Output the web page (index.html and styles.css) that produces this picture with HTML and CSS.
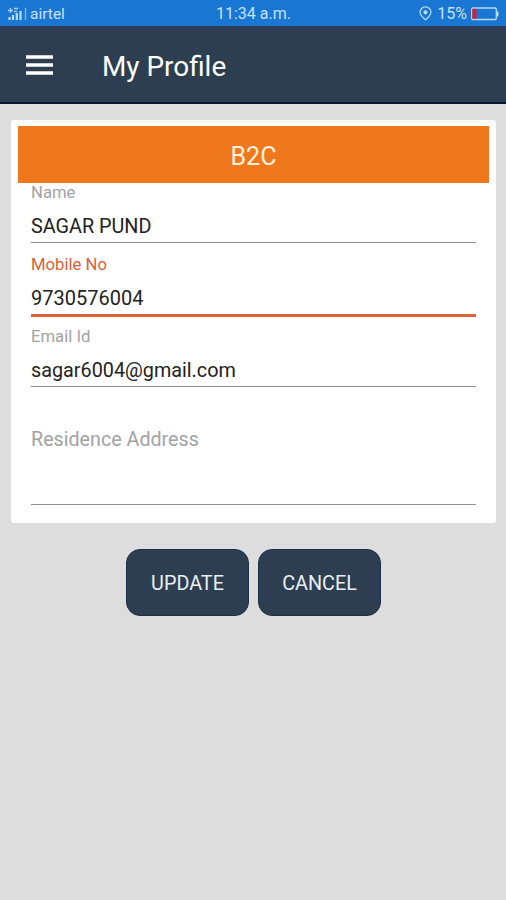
FILE: index.html
```html
<!DOCTYPE html>
<html lang="en">
<head>
<meta charset="utf-8">
<title>My Profile</title>
<link rel="stylesheet" href="styles.css">
</head>
<body>
<header>
  <div class="status">
    <div class="status-side">
      <svg class="signal" width="19" height="14" viewBox="0 0 19 14" fill="none" stroke="#b9dcf2">
        <path d="M1.500 13v-3M5 13V8M8.800 13V6M12.500 13V4" stroke-width="2.200"/>
        <path d="M17.500 13V1" stroke-width="1.400" opacity=".65"/>
        <path d="M0 3.500h5M2.500 1v5M6 1.500h4M6 4.500h3" stroke-width="1.500" opacity=".85"/>
      </svg>
      <span class="carrier">airtel</span>
    </div>
    <span class="clock">11:34 a.m.</span>
    <div class="status-side status-right">
      <svg width="13" height="15" viewBox="0 0 13 15" fill="none" stroke="#b9dcf2" stroke-width="1.200">
        <path d="M6.500 13.800C3.500 11.200 1 9 1 6.200a5.500 5.300 0 0 1 11 0c0 2.800-2.500 5-5.500 7.600z"/>
        <circle cx="6.500" cy="6.300" r="1.500" fill="#b9dcf2"/>
      </svg>
      <span class="percent">15%</span>
      <svg width="28" height="14" viewBox="0 0 28 14">
        <rect x=".7" y="1" width="24.600" height="11.500" rx="1" fill="none" stroke="#b9dcf2" stroke-width="1.300"/>
        <path d="M26.600 4.500v5" stroke="#b9dcf2" stroke-width="1.800"/>
        <rect x="1.400" y="1.800" width="4" height="9.900" fill="#e3182d"/>
      </svg>
    </div>
  </div>
  <div class="toolbar">
    <svg class="menu" width="27" height="20" viewBox="0 0 27 20">
      <path d="M0 2h27M0 10h27M0 18h27" stroke="#fff" stroke-width="3.400"/>
    </svg>
    <h1>My Profile</h1>
  </div>
</header>
<main>
  <section class="card">
    <h2>B2C</h2>
    <div class="field">
      <span class="label name">Name</span>
      <span class="value">SAGAR PUND</span>
    </div>
    <div class="field active">
      <span class="label mobile">Mobile No</span>
      <span class="value number">9730576004</span>
    </div>
    <div class="field">
      <span class="label email">Email Id</span>
      <span class="value">sagar6004@gmail.com</span>
    </div>
    <div class="field address">
      <span class="placeholder">Residence Address</span>
    </div>
  </section>
  <div class="actions">
    <button type="button">UPDATE</button>
    <button type="button">CANCEL</button>
  </div>
</main>
</body>
</html>
```
FILE: styles.css
```css
* { box-sizing: border-box; }
body {
  margin: 0;
  min-height: 900px;
  background: #ddd;
  font-family: Roboto, "Liberation Sans", sans-serif;
}
.status {
  height: 26px;
  padding: 1px 7px 0 8px;
  display: grid;
  grid-template-columns: 1fr auto 1fr;
  align-items: center;
  background: #1976d2;
  color: #c5e1f5;
  font-size: 16px;
  line-height: 24px;
}
.status-side { display: flex; align-items: center; }
.status-right { justify-content: flex-end; }
.carrier { margin-left: 3px; font-size: 15.5px; }
.percent { margin: 0 4px 0 5px; }
.toolbar {
  height: 78px;
  padding: 0 27px 0 26px;
  display: flex;
  align-items: center;
  background: #2c3e4f;
  border-bottom: 2px solid #061838;
}
.menu { margin-top: 1px; }
h1 {
  margin: 6px 0 0 49px;
  color: #fff;
  font-size: 27.9px;
  font-weight: 400;
  line-height: 34px;
}
.card {
  height: 403px;
  margin: 15.5px 10px 0 11px;
  padding: 6.5px 7px 0;
  background: #fff;
  border-radius: 3px;
}
h2 {
  height: 57px;
  margin: 0;
  background: #f0781c;
  color: #fff0dd;
  font-size: 25px;
  font-weight: 400;
  line-height: 62px;
  text-align: center;
}
.field {
  height: 60px;
  margin: 0 13px 12px;
  display: flex;
  flex-direction: column;
  border-bottom: 1.5px solid #909090;
}
.label {
  margin-bottom: 12px;
  color: #a3a3a3;
  font-size: 16.7px;
  line-height: 20px;
}
.value {
  color: #222;
  font-size: 19.8px;
  line-height: 24px;
}
.number { font-size: 20px; }
.active {
  height: 62px;
  margin-bottom: 10px;
  border-bottom: 3px solid #de6238;
}
.active .label { margin-bottom: 11px; color: #dc6136; }
.address { height: 106px; padding-top: 29px; }
.placeholder { color: #a3a3a3; font-size: 19.7px; line-height: 24px; }
.actions {
  margin-top: 26px;
  padding-left: 1px;
  display: flex;
  justify-content: center;
  gap: 9px;
}
button {
  width: 123px;
  height: 67px;
  padding: 2px 0 0;
  border: 1px solid #1c3049;
  border-radius: 14px;
  background: #2c3e4f;
  color: #e9eff4;
  font: 400 19.8px Roboto, "Liberation Sans", sans-serif;
}
```
